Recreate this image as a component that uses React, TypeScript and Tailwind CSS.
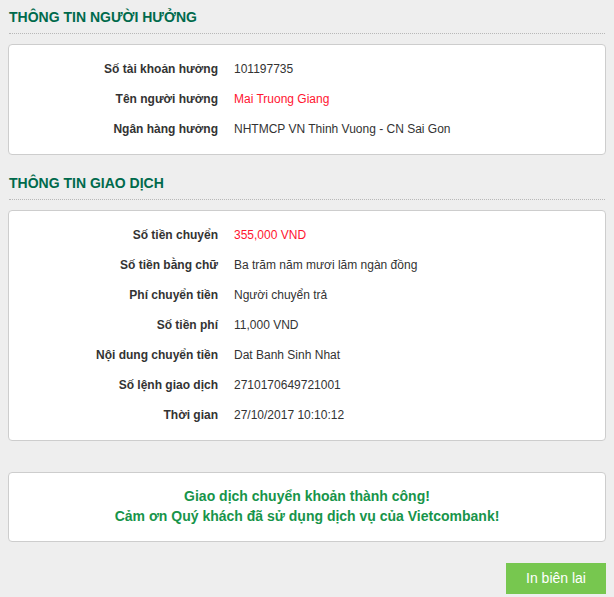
import React from "react";

type Row = { label: string; value: string; red?: boolean };

const beneficiary: Row[] = [
  { label: "Số tài khoản hưởng", value: "101197735" },
  { label: "Tên người hưởng", value: "Mai Truong Giang", red: true },
  { label: "Ngân hàng hưởng", value: "NHTMCP VN Thinh Vuong - CN Sai Gon" },
];

const transaction: Row[] = [
  { label: "Số tiền chuyển", value: "355,000 VND", red: true },
  { label: "Số tiền bằng chữ", value: "Ba trăm năm mươi lăm ngàn đồng" },
  { label: "Phí chuyển tiền", value: "Người chuyển trả" },
  { label: "Số tiền phí", value: "11,000 VND" },
  { label: "Nội dung chuyển tiền", value: "Dat Banh Sinh Nhat" },
  { label: "Số lệnh giao dịch", value: "2710170649721001" },
  { label: "Thời gian", value: "27/10/2017 10:10:12" },
];

function Heading({ children, first }: { children: React.ReactNode; first?: boolean }) {
  return (
    <div
      className={`${first ? "pt-[7px]" : "pt-[18px]"} pb-[6px] border-b border-dotted border-[#b8b8b8] ml-[1px] mr-[1px]`}
    >
      <h2 className="text-[14px] leading-[20px] font-bold text-[#006a4c]">{children}</h2>
    </div>
  );
}

function Card({ rows }: { rows: Row[] }) {
  return (
    <div className="mt-[10px] bg-white border border-[#cdcdcd] rounded-[4px] pt-[9px] pb-[10px]">
      {rows.map((r) => (
        <div key={r.label} className="flex items-center h-[30px] text-[12px]">
          <div className="w-[209px] text-right font-bold text-[#333]">{r.label}</div>
          <div className={`pl-[16px] ${r.red ? "text-[#ff1530]" : "text-[#333]"}`}>{r.value}</div>
        </div>
      ))}
    </div>
  );
}

export default function App() {
  return (
    <div
      className="min-h-[597px] bg-[#eeeeee] px-2"
      style={{ fontFamily: '"Liberation Sans", Arial, sans-serif' }}
    >
      <Heading first>THÔNG TIN NGƯỜI HƯỞNG</Heading>
      <Card rows={beneficiary} />
      <Heading>THÔNG TIN GIAO DỊCH</Heading>
      <Card rows={transaction} />
      <div className="mt-[31px] bg-white border border-[#cdcdcd] rounded-[4px] pt-[13px] pb-[15px] text-center text-[14px] leading-[20px] font-bold text-[#17944a]">
        <div>Giao dịch chuyển khoản thành công!</div>
        <div>Cảm ơn Quý khách đã sử dụng dịch vụ của Vietcombank!</div>
      </div>
      <div className="flex justify-end mt-[21px]">
        <button className="w-[100px] h-[31px] bg-[#77c74f] text-white text-[14px]">In biên lai</button>
      </div>
    </div>
  );
}
